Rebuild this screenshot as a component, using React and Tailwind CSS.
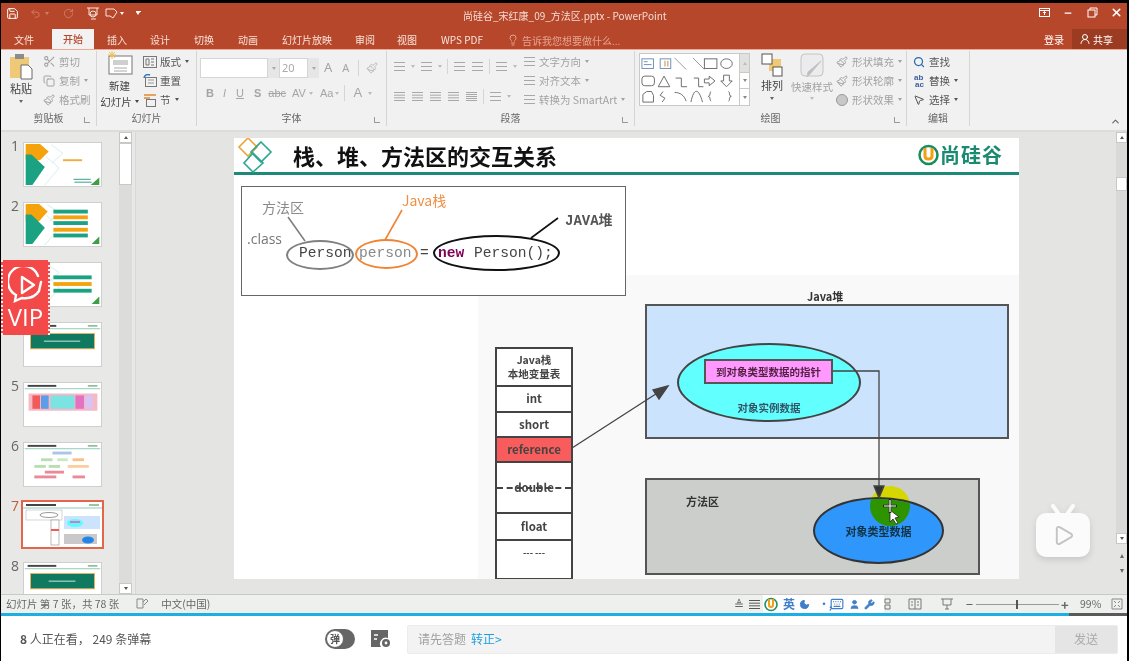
import React from "react";
import {
  Save, Undo2, RotateCw, Scissors, Copy, Paintbrush, Lightbulb, UserRound,
  Minus, X, ChevronUp, Search, MousePointer2, Moon, User, Wrench, Keyboard, Play,
} from "lucide-react";

const cjk = { fontFamily: '"Noto Sans CJK SC", "Liberation Sans", sans-serif' };

// 小三角
const Caret = ({ className = "" }) => (
  <span className={`inline-block w-0 h-0 border-x-[2.5px] border-x-transparent border-t-[3px] border-t-current ${className}`} />
);

const tabs = [
  ["插入", "ml-[13px]"],
  ["设计", "ml-[23px]"],
  ["切换", "ml-[24px]"],
  ["动画", "ml-[24px]"],
  ["幻灯片放映", "ml-[24px]"],
  ["审阅", "ml-[23px]"],
  ["视图", "ml-[22px]"],
  ["WPS PDF", "ml-[24px]"],
];

const TitleBar = () => (
  <div className="relative h-[26px] flex items-start pt-[3px] bg-[#b7472a] text-[#f4d9d0]">
    <div className="flex items-center pl-[5px]">
      <Save size={13} className="text-white" strokeWidth={1.8} />
      <Undo2 size={11} className="ml-[11px] text-[#cf7f68]" />
      <Caret className="ml-[4px] text-[#cf7f68]" />
      <RotateCw size={11} className="ml-[14px] text-[#cf7f68]" />
      <svg width="14" height="14" viewBox="0 0 14 14" className="ml-[12px]" fill="none" stroke="#f8e6df">
        <path d="M1 2h12M3 2v7h8V2" />
        <circle cx="7" cy="8" r="3" />
        <path d="M5 13h5" />
      </svg>
      <svg width="14" height="14" viewBox="0 0 14 14" className="ml-[4px]" fill="none" stroke="#f8e6df">
        <path d="M2 3h8l3 3-4 6-3-2H2z" />
      </svg>
      <Caret className="ml-[2px] text-white" />
      <span className="ml-[12px] w-[5px] border-t border-white h-[4px] flex items-end">
        <Caret className="text-white" />
      </span>
    </div>
    <div className="absolute left-[462px] top-[5px] text-[10px] leading-[16px] text-[#f4dcd4] whitespace-nowrap" style={cjk}>
      尚硅谷_宋红康_09_方法区.pptx - PowerPoint
    </div>
    <div className="ml-auto flex items-center text-white pr-[4px]">
      <svg width="11" height="11" viewBox="0 0 11 11" fill="none" stroke="currentColor">
        <rect x="0.5" y="1.5" width="10" height="8" />
        <path d="M0.5 3.5h10M5.5 8V5M4 6l1.5-1.5L7 6" />
      </svg>
      <Minus size={10} strokeWidth={3} className="ml-[13px]" />
      <svg width="11" height="11" viewBox="0 0 11 11" className="ml-[14px]" fill="none" stroke="currentColor">
        <rect x="1" y="3" width="7" height="7" />
        <path d="M3 3V1h7v7H8" />
      </svg>
      <X size={13} strokeWidth={3} className="ml-[12px]" />
    </div>
  </div>
);

const TabBar = () => (
  <div className="h-[20px] flex items-end bg-[#b7472a] text-[10px] text-[#f7e3dc]" style={cjk}>
    <span className="ml-[13px] mr-[18px] h-[18px] leading-[18px]">文件</span>
    <span className="w-[42px] h-[20px] leading-[20px] text-center bg-[#f1f2f1] text-[#b7472a] font-medium">开始</span>
    {tabs.map(([t, m]) => (
      <span key={t} className={`${m} h-[18px] leading-[18px] whitespace-nowrap`}>{t}</span>
    ))}
    <span className="ml-[24px] h-[18px] flex items-center text-[#e3a490] whitespace-nowrap">
      <Lightbulb size={12} className="mr-[3px]" />
      告诉我您想要做什么...
    </span>
    <span className="ml-auto mr-[8px] h-[18px] leading-[18px] text-white">登录</span>
    <span className="w-[55px] h-[20px] bg-[#9a3b22] flex items-center pl-[7px] text-white">
      <UserRound size={12} className="mr-[2px]" />
      共享
    </span>
  </div>
);

const Group = ({ label, width, launcher, children }) => (
  <div className={`${width} h-[75px] mt-[1px] shrink-0 relative flex flex-col border-r border-[#d5d6d4]`}>
    <div className="flex-1 min-h-0 flex">{children}</div>
    <div className="h-[17px] text-center text-[10px] leading-[17px] text-[#666]" style={cjk}>{label}</div>
    {launcher && <span className="absolute right-[6px] bottom-[3px] w-[6px] h-[6px] border-l border-b border-[#9a9a9a]" />}
  </div>
);

const SmallBtn = ({ icon, label, caret, muted = true }) => (
  <div className={`h-[19px] flex items-center whitespace-nowrap text-[10.5px] ${muted ? "text-[#a2a2a2]" : "text-[#555]"}`} style={cjk}>
    <span className="w-[16px] mr-[2px] flex justify-center items-center">{icon}</span>
    {label}
    {caret && <Caret className="ml-[4px]" />}
  </div>
);

const Glyph = ({ children, className = "" }) => <span className={`text-[11px] text-[#a5a5a5] ${className}`}>{children}</span>;

const BarsIcon = ({ rows = 3, color = "#a8a8a8" }) => (
  <svg width="13" height="11" viewBox="0 0 13 11" stroke={color}>
    {Array.from({ length: rows }).map((_, i) => (
      <path key={i} d={`M1 ${1.5 + (i * 8) / (rows - 1)}h11`} />
    ))}
  </svg>
);

const LayoutIcon = () => (
  <svg width="14" height="12" viewBox="0 0 14 12" fill="none" stroke="#777">
    <rect x="0.5" y="0.5" width="13" height="11" />
    <path d="M3 3h3v6H3zM8 3h3M8 6h3M8 9h3" />
  </svg>
);

const ResetIcon = () => (
  <svg width="14" height="13" viewBox="0 0 14 13" fill="none">
    <rect x="2.5" y="3.5" width="11" height="9" stroke="#777" />
    <path d="M5 6h6M5 9h6" stroke="#999" />
    <path d="M1 4a4 4 0 0 1 6-3" stroke="#2b78c2" strokeWidth="1.5" />
  </svg>
);

const SectionIcon = () => (
  <svg width="14" height="14" viewBox="0 0 14 14" fill="none">
    <path d="M1 2h12M1 5h6" stroke="#e08a30" strokeWidth="1.4" />
    <rect x="3.5" y="6.5" width="9" height="7" stroke="#777" />
  </svg>
);

const ShapeGallery = () => (
  <div className="mt-[2px] ml-[4px] flex h-[53px]">
    <svg width="101" height="53" viewBox="0 0 103 53" fill="none" stroke="#6b6b6b" className="bg-white border border-[#c9c9c9]">
      <rect x="2" y="5" width="12" height="10" stroke="#6d8fb8" />
      <path d="M4 8h4M4 11h8" stroke="#6d8fb8" />
      <rect x="21" y="5" width="11" height="10" stroke="#6d8fb8" />
      <path d="M26 7v6M29 7v6" stroke="#c08a3a" />
      <path d="M36 4l12 12M55 4l12 12" stroke="#999" />
      <rect x="67" y="5" width="13" height="10" />
      <ellipse cx="90" cy="10" rx="6" ry="5" />
      <rect x="2" y="23" width="13" height="10" rx="3" />
      <path d="M25 23l6 11H19zM37 25h6v9h6M56 25h5v9h5" />
      <path d="M67 26h5v-3l6 5-6 5v-3h-5zM87 22h6v6h3l-6 6-6-6h3z" />
      <path d="M3 50v-8l4-3h5l2 4v7zM24 39l-3 4 5 3-3 4" />
      <path d="M36 40c6 0 10 3 12 9M53 50c3-15 8-15 12 0" />
      <path d="M74 39c-2 0 0 5-3 5 3 0 1 5 3 5M92 39c2 0 0 5 3 5-3 0-1 5-3 5" />
    </svg>
    <div className="w-[10px] flex flex-col border border-l-0 border-[#c9c9c9] text-[#888]">
      <span className="h-[18px] bg-[#e1e2e0] flex justify-center items-center"><Caret className="rotate-180 text-[#bbb]" /></span>
      <span className="h-[17px] bg-white flex justify-center items-center border-y border-[#c9c9c9]"><Caret /></span>
      <span className="flex-1 bg-white flex justify-center items-center"><Caret /></span>
    </div>
  </div>
);

const Ribbon = () => (
  <div className="h-[81px] flex bg-[#f0f1f0] border-t border-[#eba996]">
    <Group label="剪贴板" width="w-[96px]" launcher>
      <div className="w-[40px] flex flex-col items-center pt-[3px]">
        <svg width="24" height="26" viewBox="0 0 24 26">
          <rect x="1" y="3" width="19" height="21" fill="#efc878" />
          <rect x="6" y="0" width="9" height="5" fill="#8c8c8c" />
          <path d="M12 11h7l4 4v10H12z" fill="#fff" stroke="#6a6a6a" />
        </svg>
        <span className="text-[11px] leading-[15px] mt-[1px] text-[#444]" style={cjk}>粘贴</span>
        <Caret className="mt-[4px] text-[#666]" />
      </div>
      <div className="pt-[1px]">
        <SmallBtn icon={<Scissors size={13} />} label="剪切" />
        <SmallBtn icon={<Copy size={12} />} label="复制" caret />
        <SmallBtn icon={<Paintbrush size={12} />} label="格式刷" />
      </div>
    </Group>
    <Group label="幻灯片" width="w-[100px]">
      <div className="w-[45px] flex flex-col items-center">
        <svg width="26" height="24" viewBox="0 0 26 24" fill="none">
          <rect x="2" y="5" width="23" height="18" fill="#fff" stroke="#777" />
          <rect x="6" y="9" width="15" height="5" fill="#cfcfcf" />
          <path d="M7 17h13M7 20h13" stroke="#aaa" />
          <path d="M5 0v8M1 4h8M2 1l6 6M8 1L2 7" stroke="#efc04e" />
        </svg>
        <span className="text-[10.5px] leading-[17px] mt-[2px] text-[#444]" style={cjk}>新建</span>
        <span className="text-[10.5px] leading-[15px] text-[#444] whitespace-nowrap flex items-center" style={cjk}>幻灯片<Caret className="ml-[3px]" /></span>
      </div>
      <div className="pt-[1px]">
        <SmallBtn muted={false} icon={<LayoutIcon />} label="版式" caret />
        <SmallBtn muted={false} icon={<ResetIcon />} label="重置" />
        <SmallBtn muted={false} icon={<SectionIcon />} label="节" caret />
      </div>
    </Group>
    <Group label="字体" width="w-[190px]" launcher>
      <div className="pl-[3px] pt-[7px] flex flex-col gap-[5px]">
        <div className="flex items-center h-[20px]">
          <div className="w-[68px] h-full bg-white border border-[#d6d6d6]" />
          <div className="w-[11px] h-full bg-[#e6e6e6] flex items-center justify-center text-[#aaa]"><Caret /></div>
          <div className="w-[29px] h-full bg-white border border-[#d6d6d6] text-[11px] leading-[18px] pl-[2px] text-[#aaa]">20</div>
          <div className="w-[11px] h-full bg-[#e6e6e6] flex items-center justify-center text-[#aaa]"><Caret /></div>
          <Glyph className="ml-[5px] text-[13px]">A</Glyph>
          <Glyph className="ml-[10px]">A</Glyph>
          <span className="w-px h-[16px] ml-[9px] bg-[#d5d6d4]" />
          <Paintbrush size={12} className="ml-[7px] text-[#bbb]" />
        </div>
        <div className="flex items-center h-[20px] pl-[6px]" style={{ fontFamily: '"Liberation Sans", sans-serif' }}>
          <Glyph className="font-bold">B</Glyph>
          <Glyph className="ml-[9px] italic">I</Glyph>
          <Glyph className="ml-[10px] underline">U</Glyph>
          <Glyph className="ml-[10px] font-bold">S</Glyph>
          <Glyph className="ml-[7px] text-[9px] line-through">abc</Glyph>
          <Glyph className="ml-[6px] text-[10px]">AV</Glyph>
          <Caret className="ml-[3px] text-[#bbb]" />
          <Glyph className="ml-[7px]">Aa</Glyph>
          <Caret className="ml-[2px] text-[#bbb]" />
          <span className="w-px h-[16px] ml-[5px] bg-[#d5d6d4]" />
          <Glyph className="ml-[8px] text-[13px]">A</Glyph>
          <Caret className="ml-[6px] text-[#bbb]" />
        </div>
      </div>
    </Group>
    <Group label="段落" width="w-[248px]" launcher>
      <div className="pl-[6px] pt-[4px] w-[134px] flex flex-col">
        <div className="flex items-center h-[22px] gap-[5px]">
          <BarsIcon /><Caret className="text-[#bbb]" />
          <BarsIcon /><Caret className="text-[#bbb]" />
          <span className="w-px h-[15px] bg-[#d5d6d4]" />
          <BarsIcon /><BarsIcon />
          <span className="w-px h-[15px] bg-[#d5d6d4]" />
          <BarsIcon /><Caret className="text-[#bbb]" />
        </div>
        <div className="flex items-center h-[22px] mt-[8px] gap-[5px]">
          <BarsIcon rows={4} /><BarsIcon rows={4} /><BarsIcon rows={4} /><BarsIcon rows={4} /><BarsIcon rows={5} />
          <span className="w-px h-[15px] bg-[#d5d6d4]" />
          <BarsIcon /><Caret className="text-[#bbb]" />
        </div>
      </div>
      <div className="pt-[1px]">
        <SmallBtn icon={<BarsIcon />} label="文字方向" caret />
        <SmallBtn icon={<BarsIcon />} label="对齐文本" caret />
        <SmallBtn icon={<BarsIcon />} label="转换为 SmartArt" caret />
      </div>
    </Group>
    <Group label="绘图" width="w-[272px]" launcher>
      <ShapeGallery />
      <div className="w-[40px] ml-[2px] flex flex-col items-center pt-[2px]">
        <svg width="22" height="24" viewBox="0 0 22 24">
          <rect x="8" y="6" width="12" height="12" fill="#efc878" />
          <rect x="1" y="1" width="10" height="10" fill="#fff" stroke="#555" />
          <rect x="12" y="14" width="9" height="9" fill="#fff" stroke="#555" />
        </svg>
        <span className="text-[11px] leading-[17px] text-[#444]" style={cjk}>排列</span>
        <Caret className="mt-[3px] text-[#666]" />
      </div>
      <div className="w-[40px] flex flex-col items-center pt-[2px]">
        <svg width="24" height="26" viewBox="0 0 24 26" fill="#ecebee" stroke="#c4c4c4">
          <rect x="1" y="1" width="22" height="22" rx="4" />
          <path d="M21 8L10 21l-3 3 1-5z" fill="#bdbdbd" />
        </svg>
        <span className="text-[10.5px] leading-[15px] text-[#a2a2a2] whitespace-nowrap" style={cjk}>快速样式</span>
        <Caret className="mt-[3px] text-[#bbb]" />
      </div>
      <div className="pt-[1px] pl-[2px]">
        <SmallBtn icon={<Paintbrush size={12} />} label="形状填充" caret />
        <SmallBtn icon={<Paintbrush size={12} />} label="形状轮廓" caret />
        <SmallBtn icon={<span className="w-[12px] h-[12px] rounded-full bg-[#c8c8c8] border border-[#999]" />} label="形状效果" caret />
      </div>
    </Group>
    <Group label="编辑" width="w-[63px]">
      <div className="pt-[1px] pl-[4px]">
        <SmallBtn muted={false} icon={<Search size={12} className="text-[#2b6cb0]" strokeWidth={2.5} />} label="查找" />
        <SmallBtn
          muted={false}
          icon={
            <svg width="13" height="14" viewBox="0 0 13 14" fill="#3d5f9e" fontSize="8" fontWeight="700" fontFamily="Liberation Sans">
              <text x="1" y="6">ab</text>
              <text x="2" y="13">ac</text>
            </svg>
          }
          label="替换"
          caret
        />
        <SmallBtn muted={false} icon={<MousePointer2 size={12} />} label="选择" caret />
      </div>
    </Group>
    <div className="flex-1 flex items-end justify-end pr-[6px] pb-[3px] text-[#666]">
      <ChevronUp size={11} strokeWidth={2.5} />
    </div>
  </div>
);

// 缩略图内容
const Cover = ({ rows }) => (
  <svg viewBox="0 0 79 45" className="w-full h-full">
    <path d="M1 1h14l9 8-9 10H1z" fill="#f4a30c" />
    <path d="M1 12h6l14 14L8 43H1z" fill="#1aa283" />
    <path d="M24 2l12 8-10 9M22 12l14 14-15 18" fill="none" stroke="#cfeee7" />
    {rows.map(([y, c, w], i) => (
      <rect key={i} x="30" y={y} width={w} height="4" fill={c} />
    ))}
    <path d="M70 43l8-8v8z" fill="#3f9c47" />
  </svg>
);

const MiniHeader = () => (
  <>
    <path d="M3 3h30" stroke="#444" strokeWidth="2" />
    <path d="M66 3h10" stroke="#7bb08c" strokeWidth="1.5" />
    <path d="M0 6h79" stroke="#8cc9b9" />
  </>
);

const thumbs = [
  <svg viewBox="0 0 79 45" className="w-full h-full" key="1">
    <path d="M1 1h15l9 8-9 9H1z" fill="#f4a30c" />
    <path d="M1 12h6l14 13L8 44H1z" fill="#1aa283" />
    <path d="M28 2l12 9-12 10M22 14l14 12-15 18" fill="none" stroke="#d6efe9" />
    <path d="M40 18h20" stroke="#f0ad3a" strokeWidth="2" />
    <path d="M51 38h18M52 41h18" stroke="#2b9f84" />
    <path d="M69 44l9-8v8z" fill="#3f9c47" />
  </svg>,
  <Cover key="2" rows={[[7, "#1aa283", 36], [13, "#f4a30c", 36], [19, "#1aa283", 36], [26, "#f4a30c", 36], [32, "#1aa283", 36]]} />,
  <Cover key="3" rows={[[13, "#1aa283", 40], [20, "#f4a30c", 40], [27, "#1aa283", 40]]} />,
  <svg viewBox="0 0 79 45" className="w-full h-full" key="4">
    <MiniHeader />
    <rect x="6" y="11" width="67" height="16" fill="#0f7a5f" stroke="#e8b060" />
    <path d="M20 19h38" stroke="#cfeee7" />
  </svg>,
  <svg viewBox="0 0 79 45" className="w-full h-full" key="5">
    <MiniHeader />
    <rect x="4" y="11" width="72" height="18" fill="#f5b8c4" />
    <rect x="8" y="13" width="8" height="14" fill="#f05a5a" />
    <rect x="17" y="13" width="8" height="14" fill="#5b9de8" />
    <rect x="27" y="13" width="25" height="14" fill="#7ce3e3" />
    <rect x="53" y="13" width="9" height="14" fill="#e472c0" />
    <rect x="63" y="13" width="8" height="14" fill="#d8c4f4" />
  </svg>,
  <svg viewBox="0 0 79 45" className="w-full h-full" key="6">
    <MiniHeader />
    <rect x="29" y="9" width="20" height="3" fill="#a9c5ec" />
    <rect x="17" y="16" width="12" height="3" fill="#b7e0b0" />
    <rect x="34" y="16" width="11" height="3" fill="#c8ecc0" />
    <rect x="50" y="16" width="12" height="3" fill="#f7c28a" />
    <rect x="10" y="23" width="12" height="3" fill="#b7e0b0" />
    <rect x="25" y="23" width="12" height="3" fill="#b7e0b0" />
    <rect x="45" y="23" width="22" height="3" fill="#f9cfa2" />
    <rect x="21" y="29" width="20" height="3" fill="#e88a9a" />
    <rect x="10" y="34" width="23" height="3" fill="#e88a9a" />
    <rect x="50" y="34" width="13" height="3" fill="#e88a9a" />
  </svg>,
  <svg viewBox="0 0 79 45" className="w-full h-full" key="7">
    <MiniHeader />
    <rect x="3" y="8" width="36" height="10" fill="none" stroke="#aaa" strokeWidth="0.5" />
    <ellipse cx="26" cy="13" rx="9" ry="2.5" fill="none" stroke="#333" strokeWidth="0.5" />
    <rect x="41" y="14" width="36" height="13" fill="#cbe3fb" />
    <ellipse cx="52" cy="21" rx="8" ry="4" fill="#5ff" />
    <rect x="47" y="19" width="10" height="2" fill="#e472c0" />
    <rect x="28" y="18" width="8" height="25" fill="#fff" stroke="#777" strokeWidth="0.5" />
    <rect x="28" y="27" width="8" height="2" fill="#f05a5a" />
    <rect x="41" y="32" width="33" height="10" fill="#c9c9c9" />
    <ellipse cx="65" cy="38" rx="6" ry="3.5" fill="#1f85e8" />
  </svg>,
  <svg viewBox="0 0 79 45" className="w-full h-full" key="8">
    <MiniHeader />
    <rect x="6" y="11" width="67" height="16" fill="#0f7a5f" stroke="#e8b060" />
    <path d="M25 19h28" stroke="#cfeee7" />
  </svg>,
];

const ScrollBtn = ({ up, className = "" }) => (
  <span className={`h-[11px] bg-white border border-[#c8c8c8] flex items-center justify-center text-[#555] ${className}`}>
    <Caret className={up ? "rotate-180" : ""} />
  </span>
);

const ThumbPanel = () => (
  <div className="w-[135px] shrink-0 flex bg-[#e8e9e7] border-r border-[#d8d9d7]">
    <div className="w-[118px] overflow-hidden pt-[10px]">
      {thumbs.map((t, i) => (
        <div key={i} className="h-[60px] flex items-start">
          {/* 3、4 两个序号被 VIP 角标挡住了 */}
          <span className={`w-[22px] pl-[10px] -mt-[3px] text-[14px] leading-[14px] ${i === 6 ? "text-[#c8563a]" : "text-[#666]"}`} style={{ fontFamily: '"Open Sans", sans-serif' }}>
            {i === 2 || i === 3 ? "" : i + 1}
          </span>
          <div className={`w-[79px] h-[45px] shrink-0 bg-white ${i === 6 ? "outline-[2px] outline-[#e2674a]" : "border border-[#cfcfcf]"}`}>{t}</div>
        </div>
      ))}
    </div>
    <div className="w-[13px] flex flex-col bg-[#dcdddb]">
      <ScrollBtn up />
      <span className="h-[42px] bg-white border border-[#c8c8c8]" />
      <ScrollBtn className="mt-auto" />
    </div>
  </div>
);

const EllipseNode = ({ className, children }) => (
  <div className={`absolute rounded-[50%] flex items-center justify-center ${className}`}>{children}</div>
);

const Code = ({ className, children }) => (
  <span className={`absolute text-[14.6px] leading-[18px] whitespace-pre ${className}`} style={{ fontFamily: '"Liberation Mono", monospace' }}>{children}</span>
);

// 坐标都是相对幻灯片左上角
const SlideHeader = () => (
  <div className="h-[37px] flex items-center border-b-[3px] border-[#1c8a78]">
    <svg width="42" height="36" viewBox="0 0 42 36" fill="none" strokeWidth="1.6" className="ml-[3px]">
      <path d="M11 1l9 9-9 9-9-9z" stroke="#e8a73a" />
      <path d="M24 5l10 10-10 10-10-10z" stroke="#2aa78f" />
      <path d="M16 16l10 10-10 9-9-9z" stroke="#2aa78f" />
    </svg>
    <h1 className="ml-[14px] text-[22px] leading-[30px] font-bold text-[#111] whitespace-nowrap" style={cjk}>栈、堆、方法区的交互关系</h1>
    <div className="ml-auto mr-[16px] flex items-center">
      <svg width="21" height="22" viewBox="0 0 21 22" fill="none">
        <circle cx="10.5" cy="11" r="9" stroke="#1b8a5f" strokeWidth="2.5" />
        <path d="M7 4v8c0 4 7 4 7 0V4" stroke="#f0a010" strokeWidth="3" />
      </svg>
      <span className="text-[20px] leading-[24px] font-bold text-[#1a8b6f] ml-[1px] tracking-[1px]" style={cjk}>尚硅谷</span>
    </div>
  </div>
);

const CodeBox = () => (
  <div className="absolute left-[7px] top-[48px] w-[385px] h-[110px] bg-white border border-[#666]">
    <span className="absolute left-[20px] top-[10px] text-[14px] leading-[20px] text-[#8a8a8a]" style={cjk}>方法区</span>
    <span className="absolute left-[5px] top-[43px] text-[14px] leading-[18px] text-[#777]" style={{ fontFamily: '"Open Sans", sans-serif' }}>.class</span>
    <span className="absolute left-[160px] top-[3px] text-[14px] leading-[20px] text-[#ef8f45]" style={cjk}>Java栈</span>
    <span className="absolute left-[323px] top-[25px] text-[14px] leading-[18px] font-bold text-[#555] whitespace-nowrap" style={{ fontFamily: '"Liberation Mono", "Noto Sans CJK SC", monospace' }}>JAVA堆</span>
    <EllipseNode className="left-[44px] top-[53px] w-[68px] h-[30px] border-2 border-[#808080]" />
    <EllipseNode className="left-[113px] top-[52px] w-[63px] h-[30px] border-2 border-[#ef8534]" />
    <EllipseNode className="left-[191px] top-[48px] w-[127px] h-[36px] border-2 border-[#111]" />
    <Code className="left-[57px] top-[57px] text-[#444]">Person</Code>
    <Code className="left-[117px] top-[57px] text-[#888]">person</Code>
    <Code className="left-[178px] top-[57px] text-[#444]">=</Code>
    <Code className="left-[196px] top-[57px] font-bold text-[#7f0055]">new</Code>
    <Code className="left-[232px] top-[57px] text-[#444]">Person();</Code>
    <svg className="absolute inset-0" width="383" height="108" fill="none">
      <path d="M46 30l17 24" stroke="#808080" strokeWidth="1.6" />
      <path d="M160 23l-17 30" stroke="#ef8534" strokeWidth="1.6" />
      <path d="M316 31l-27 20" stroke="#111" strokeWidth="1.6" />
    </svg>
  </div>
);

const stackRows = [
  ["本地", "h-[38px]"],
  ["int", "h-[26px]"],
  ["short", "h-[25px]"],
  ["reference", "h-[25px] bg-[#f85c5c]"],
  ["double", "h-[51px]"],
  ["float", "h-[27px]"],
  ["--- ---", "h-[37px] items-start pt-[5px] text-[9px]"],
];

const StackTable = () => (
  <div className="absolute left-[261px] top-[209px] w-[78px] border-2 border-[#444] bg-white text-[11.5px] font-bold text-[#444] text-center" style={cjk}>
    {stackRows.map(([t, cls], i) => (
      <div key={t} className={`relative flex items-center justify-center border-[#444] ${i < 6 ? "border-b-2" : ""} ${cls}`}>
        {i === 0 ? (
          <span className="leading-[14px] text-[10.5px]">Java栈<br />本地变量表</span>
        ) : t}
        {t === "double" && <span className="absolute left-0 right-0 top-[24px] border-t-2 border-dashed border-[#444]" />}
      </div>
    ))}
  </div>
);

const HeapArea = () => (
  <>
    <span className="absolute left-[573px] top-[151px] text-[11px] leading-[14px] font-bold text-[#333]" style={cjk}>Java堆</span>
    <div className="absolute left-[411px] top-[166px] w-[364px] h-[135px] bg-[#cbe3fd] border-2 border-[#555]" />
    <EllipseNode className="left-[443px] top-[205px] w-[184px] h-[79px] bg-[#62ffff] border-2 border-[#444]">
      <span className="mt-[50px] text-[10.5px] leading-[14px] font-bold text-[#356]" style={cjk}>对象实例数据</span>
    </EllipseNode>
    <div className="absolute left-[470px] top-[221px] w-[129px] h-[25px] bg-[#ff99ff] border-2 border-[#555] flex items-center justify-center text-[10.5px] font-bold text-[#524] whitespace-nowrap" style={cjk}>
      到对象类型数据的指针
    </div>
    <div className="absolute left-[411px] top-[340px] w-[335px] h-[97px] bg-[#cccecc] border-2 border-[#555]">
      <span className="absolute left-[39px] top-[14px] text-[11px] leading-[14px] font-bold text-[#333]" style={cjk}>方法区</span>
    </div>
    {/* 鼠标高亮：黄圈压在椭圆下面，椭圆里的部分变绿 */}
    <span className="absolute left-[636px] top-[348px] w-[40px] h-[40px] rounded-full bg-[#d6d600]" />
    <EllipseNode className="left-[579px] top-[359px] w-[131px] h-[67px] bg-[#2f96fb] border-2 border-[#333] overflow-hidden">
      <span className="absolute left-[55px] -top-[13px] w-[40px] h-[40px] rounded-full bg-[#2d9400]" />
      <span className="relative mt-[2px] text-[11px] font-bold text-[#134] whitespace-nowrap" style={cjk}>对象类型数据</span>
    </EllipseNode>
    <svg className="absolute left-0 top-0" width="785" height="441" fill="none" stroke="#444" strokeWidth="1.3">
      <path d="M338 310l90-58" />
      <path d="M434 248l-15 4 6 9z" fill="#444" />
      <path d="M599 233h46v118" />
      <path d="M645 360l-5-12h10z" fill="#333" />
      <path d="M656 372l0 12 3-3 3 5 2-1-3-5 4-1z" fill="#fff" stroke="#222" strokeWidth="0.8" />
      <path d="M656 361v14M649 368h14" stroke="#222" strokeWidth="2.6" />
      <path d="M656 362v12M650 368h12" stroke="#fff" strokeWidth="1.2" />
    </svg>
  </>
);

const Slide = () => (
  <div className="relative w-[785px] h-[441px] bg-white shrink-0 overflow-hidden" style={cjk}>
    <SlideHeader />
    <div className="absolute left-[244px] top-[137px] right-0 bottom-0 bg-[#f9f9f9]" />
    <CodeBox />
    <StackTable />
    <HeapArea />
  </div>
);

const RightScroll = () => (
  <div className="w-[11px] shrink-0 flex flex-col bg-[#d9dad8]">
    <ScrollBtn up />
    <span className="h-[14px] mt-[34px] bg-white border border-[#c8c8c8]" />
    <ScrollBtn className="mt-auto" />
    <div className="h-[50px] bg-[#e4e5e3] flex flex-col items-center pt-[10px] gap-[11px] text-[#666]">
      <Caret className="rotate-180 border-t-[4px]" />
      <Caret className="border-t-[4px]" />
    </div>
  </div>
);

const Main = () => (
  <div className="h-[464px] flex border-t-2 border-[#dcdddb] bg-[#e4e5e3] overflow-hidden">
    <ThumbPanel />
    <div className="flex-1 pl-[98px] pt-[6px]">
      <Slide />
    </div>
    <RightScroll />
  </div>
);

const StatusBar = () => (
  <div className="h-[19px] flex items-center bg-[#eef0ee] border-t border-[#c9cac8] text-[10.5px] text-[#666] whitespace-nowrap" style={cjk}>
    <span className="ml-[5px]">幻灯片 第 7 张，共 78 张</span>
    <svg width="13" height="12" viewBox="0 0 13 12" className="ml-[17px]" fill="none" stroke="#888">
      <path d="M1 1h6v9H1zM7 4l3-3 2 2-4 4" />
    </svg>
    <span className="ml-[12px]">中文(中国)</span>
    <div className="ml-auto flex items-center h-full">
      <span className="text-[12px] mr-[4px]">≜</span>
      <BarsIcon rows={4} color="#555" />
      <div className="h-full w-[121px] ml-[2px] bg-white flex items-center text-[#3f7fc9] pl-[1px]">
        <svg width="14" height="15" viewBox="0 0 14 15" fill="none">
          <circle cx="7" cy="7.5" r="6" stroke="#1f8f5f" strokeWidth="1.6" />
          <path d="M5 2v6c0 2.6 4 2.6 4 0V2" stroke="#f0a010" strokeWidth="2" />
        </svg>
        <span className="ml-[5px] text-[12px] font-bold">英</span>
        <Moon size={11} fill="currentColor" className="ml-[4px]" />
        <span className="ml-[9px] w-[5px] text-[10px] font-bold leading-none">•,</span>
        <Keyboard size={14} className="ml-[6px]" />
        <User size={11} fill="currentColor" className="ml-[5px]" />
        <Wrench size={11} fill="currentColor" className="ml-[4px]" />
      </div>
      <svg width="9" height="12" viewBox="0 0 9 12" fill="none" stroke="#777"><path d="M1 1h5v4H1zM1 7h5v4H1z" /></svg>
      <svg width="14" height="12" viewBox="0 0 14 12" className="ml-[15px]" fill="none" stroke="#777"><path d="M1 1h12v10H1zM7 1v10M3 4h2M9 4h2M3 7h2M9 7h2" /></svg>
      <svg width="14" height="12" viewBox="0 0 14 12" className="ml-[18px]" fill="none" stroke="#777"><path d="M1 1h12M3 1v6h8V1M7 7v4M5 11h4" /></svg>
      <Minus size={9} strokeWidth={3} className="ml-[11px]" />
      <div className="relative w-[83px] ml-[2px] border-t border-[#999]">
        <span className="absolute left-[40px] -top-[5px] w-[2px] h-[9px] bg-[#555]" />
      </div>
      <span className="ml-[2px] w-[8px] text-[13px] leading-none font-bold">+</span>
      <span className="ml-[11px] w-[22px]">99%</span>
      <svg width="12" height="12" viewBox="0 0 12 12" className="ml-[9px] mr-[4px]" fill="none" stroke="#888"><path d="M1 1h10v10H1zM3 3l2 2M9 3L7 5M3 9l2-2M9 9L7 7" /></svg>
    </div>
  </div>
);

const ProgressLine = () => (
  <div className="h-[3px] flex">
    <div className="flex-1 bg-[#1cafe5]" />
    <div className="w-[58px] bg-[#5a5a5a]" />
  </div>
);

const DanmuBar = () => (
  <div className="h-[46px] bg-white flex items-center text-[12px]" style={cjk}>
    <span className="ml-[19px] w-[134px] text-[#555] whitespace-nowrap">
      <b className="font-bold">8</b> 人正在看， 249 条弹幕
    </span>
    <div className="ml-[171px] w-[30px] h-[20px] rounded-full bg-[#666] flex items-center pl-[1px]">
      <span className="w-[18px] h-[18px] rounded-full bg-white border border-[#666] text-[10px] leading-[16px] text-center font-bold text-[#555]">弹</span>
    </div>
    <svg width="20" height="18" viewBox="0 0 20 18" className="ml-[16px]" fill="#666">
      <path d="M0 0h17v8a6 6 0 0 0-7 9H0z" />
      <path d="M3 5h4M3 9h3" stroke="#fff" strokeWidth="1.5" />
      <circle cx="15" cy="13" r="4" />
      <circle cx="15" cy="13" r="1.4" fill="#fff" />
    </svg>
    <div className="ml-[16px] w-[711px] h-[29px] flex items-center bg-[#f3f3f3] border border-[#ececec] rounded-[2px]">
      <span className="ml-[10px] text-[#a0a0a0]">请先答题</span>
      <span className="ml-[5px] text-[#1a9fe0]">转正&gt;</span>
      <span className="ml-auto w-[62px] h-full flex items-center justify-center bg-[#e5e5e5] text-[#ababab]">发送</span>
    </div>
  </div>
);

const VipBadge = () => (
  <div className="absolute left-[1px] top-[260px] w-[49px] h-[75px] bg-[#f44949] flex flex-col items-center border-x-2 border-dotted border-white/90">
    <svg width="36" height="38" viewBox="0 0 36 38" fill="none" stroke="#fff" strokeWidth="2.4" className="mt-[7px]">
      <path d="M30 9A15.5 15.5 0 1 0 8 28l-1 6 7-3c7 1 13-1 17-7l2-9" strokeLinecap="round" />
      <path d="M14 10l12 8-12 8z" strokeLinejoin="round" />
    </svg>
    <span className="text-[24px] leading-[26px] -mt-[1px] font-medium text-white" style={{ fontFamily: '"Open Sans", sans-serif' }}>VIP</span>
  </div>
);

const TvBadge = () => (
  <div className="absolute left-[1036px] top-[504px] w-[54px] h-[56px] flex flex-col items-center drop-shadow-md">
    <svg width="28" height="10" viewBox="0 0 28 10" stroke="#fbfbfb" strokeWidth="4" strokeLinecap="round">
      <path d="M4 2l5 7M24 2l-5 7" />
    </svg>
    <div className="w-[54px] h-[44px] -mt-[1px] rounded-[10px] bg-[#fbfbfb] flex items-center justify-center">
      <Play size={23} className="text-[#c4c4c4]" strokeWidth={2} />
    </div>
  </div>
);

export default function App() {
  return (
    <div className="relative w-[1129px] h-[661px] overflow-hidden bg-black pt-[3px] pl-[1px] pr-[2px] blur-[0.35px]">
      <TitleBar />
      <TabBar />
      <Ribbon />
      <Main />
      <StatusBar />
      <ProgressLine />
      <DanmuBar />
      <VipBadge />
      <TvBadge />
    </div>
  );
}
